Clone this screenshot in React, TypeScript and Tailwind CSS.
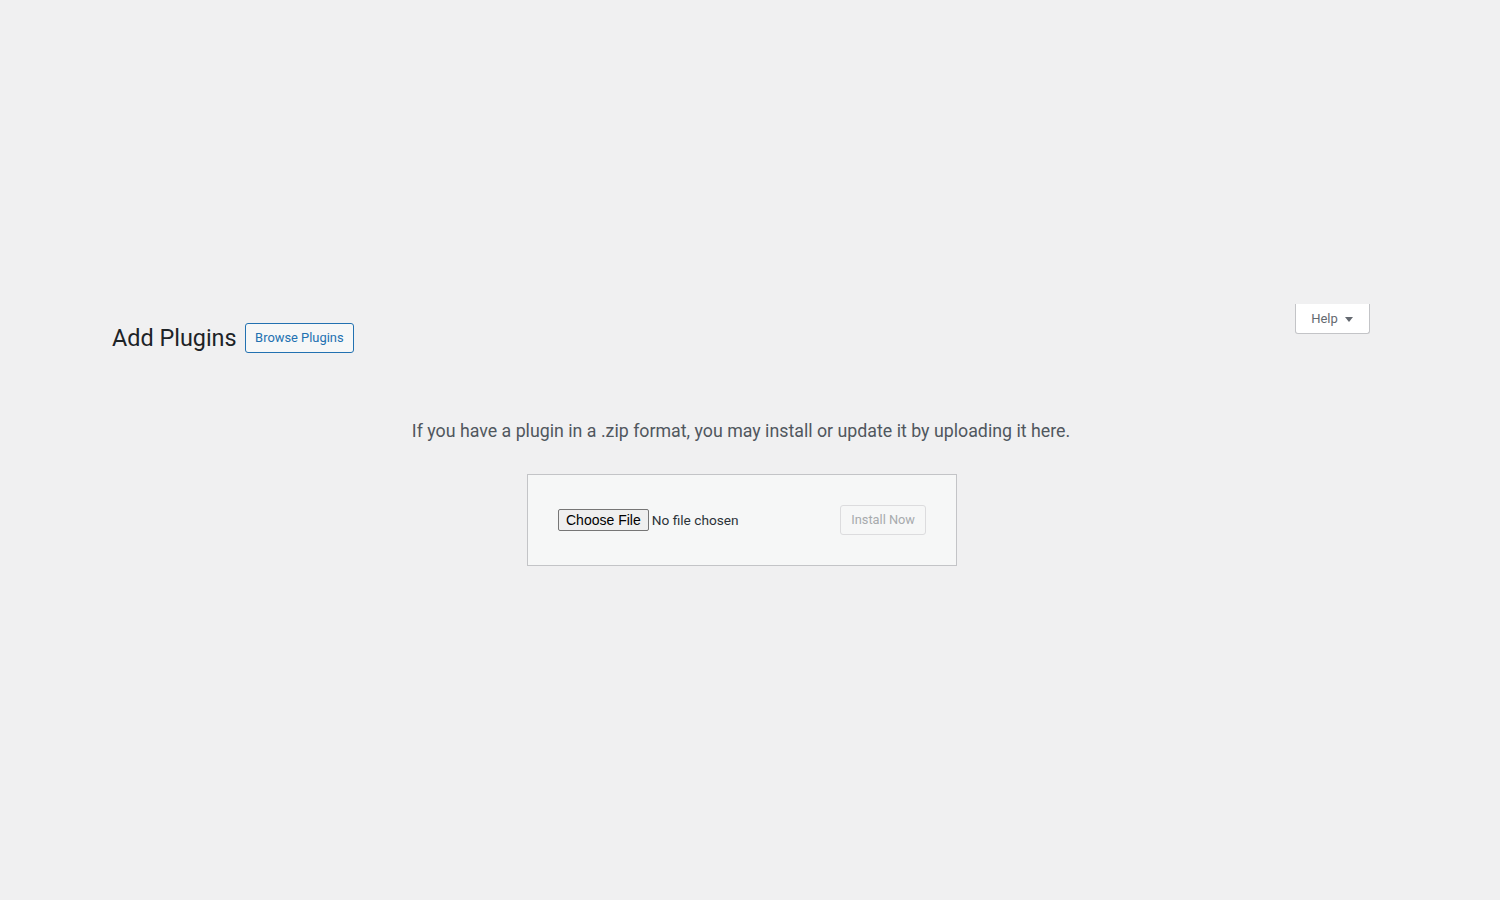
import React from "react";

export default function App() {
  return (
    <div className="min-h-[900px] w-full bg-[#f0f0f1] font-['Roboto',sans-serif] text-[#3c434a]">
      <div className="pl-[112px] pr-[130px] pt-[304px]">
        {/* title row + help tab */}
        <div className="flex items-start justify-between">
          <div className="mt-[19px] flex items-center">
            <h1 className="text-[23.4px] font-normal leading-[30px] text-[#1d2327]">Add Plugins</h1>
            <button
              type="button"
              className="ml-[8px] h-[30px] rounded-[3px] border border-[#2271b1] bg-[#f6f7f7] px-[9.5px] text-[12.9px] leading-[28px] text-[#2271b1]"
            >
              Browse Plugins
            </button>
          </div>
          <button
            type="button"
            className="flex h-[30px] w-[75px] items-center justify-center gap-[6px] rounded-b-[3px] border border-t-0 border-[#c3c4c7] bg-white text-[13px] text-[#646970]"
          >
            Help
            <svg width="10" height="10" viewBox="0 0 10 10" className="mt-[1px]">
              <path d="M1 3h8L5 8z" fill="#646970" />
            </svg>
          </button>
        </div>

        {/* upload area */}
        <div className="flex flex-col items-center">
          <p className="mt-[64px] text-[17.8px] leading-[27px] text-[#50575e]">
            If you have a plugin in a .zip format, you may install or update it by uploading it here.
          </p>
          <form className="ml-[2px] mt-[30px] flex w-[430px] items-center justify-between border border-[#c3c4c7] bg-[#f6f7f7] p-[30px]">
            <div className="flex items-center">
              <span className="flex h-[22px] items-center rounded-[2px] border border-[#767676] bg-[#efefef] px-[7px] font-['Liberation_Sans',Arial,sans-serif] text-[14px] text-black">
                Choose File
              </span>
              <span className="ml-[3px] text-[13.7px] text-[#2c3338]">No file chosen</span>
            </div>
            <button
              type="button"
              disabled
              className="h-[30px] rounded-[3px] border border-[#dcdcde] bg-[#f6f7f7] px-[10px] text-[12.8px] leading-[28px] text-[#a7aaad]"
            >
              Install Now
            </button>
          </form>
        </div>
      </div>
    </div>
  );
}
